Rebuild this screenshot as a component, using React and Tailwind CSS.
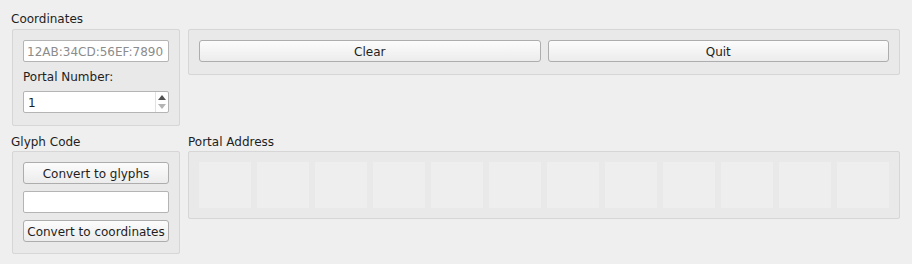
import React from "react";

const font = { fontFamily: '"DejaVu Sans", sans-serif' };

const Button = ({ children, className = "" }) => (
  <button
    className={`h-[22px] rounded-[3px] border border-[#adadad] bg-gradient-to-b from-[#fcfcfc] to-[#ececec] pt-px text-[12px] leading-[14px] text-[#1e1e1e] ${className}`}
  >
    {children}
  </button>
);

const Box = ({ children, className = "" }) => (
  <div className={`rounded-[2px] border border-[#d6d6d6] bg-[#e9e9e9] ${className}`}>
    {children}
  </div>
);

const SpinBox = () => (
  <div className="flex h-[22px] rounded-[2px] border border-[#b4b4b4] bg-white">
    <div className="flex flex-1 items-center pl-[4px] pt-px text-[12px] text-[#1e1e1e]">1</div>
    <div className="flex w-[13px] flex-col items-center justify-center gap-[4px] border-l border-[#e2e2e2]">
      <svg width="8" height="5" viewBox="0 0 8 5">
        <path d="M0 5 L4 0 L8 5 Z" fill="#505050" />
      </svg>
      <svg width="8" height="5" viewBox="0 0 8 5">
        <path d="M0 0 L4 5 L8 0 Z" fill="#b4b4b4" />
      </svg>
    </div>
  </div>
);

export default function App() {
  const tiles = Array.from({ length: 12 }, (_, i) => i);

  return (
    <div
      className="h-[264px] w-[912px] overflow-hidden bg-[#efefef] pl-[12px] pt-[11px] text-[12px] leading-[14px] text-[#1e1e1e]"
      style={font}
    >
      <div className="grid grid-cols-[168px_712px] gap-x-[8px]">
        <div className="-ml-px h-[18px] pt-px">Coordinates</div>
        <div className="h-[18px]" />

        <Box className="flex h-[97px] flex-col px-[10px] pt-[10px]">
          <div className="flex h-[22px] items-center rounded-[2px] border border-[#b4b4b4] bg-white pl-[3px] pt-px text-[#8c8c8c]">
            12AB:34CD:56EF:7890
          </div>
          <div className="flex h-[29px] items-center pt-px">Portal Number:</div>
          <SpinBox />
        </Box>
        <Box className="flex h-[46px] gap-[7px] self-start px-[10px] pt-[10px]">
          <Button className="flex-1">Clear</Button>
          <Button className="flex-1">Quit</Button>
        </Box>

        <div className="-ml-px mt-[9px] h-[16px]">Glyph Code</div>
        <div className="mt-[9px] h-[16px]">Portal Address</div>

        <Box className="flex h-[103px] flex-col gap-[7px] px-[10px] pt-[10px]">
          <Button>Convert to glyphs</Button>
          <div className="h-[22px] rounded-[2px] border border-[#b4b4b4] bg-white" />
          <Button>Convert to coordinates</Button>
        </Box>
        <Box className="grid h-[68px] grid-cols-12 gap-[6px] self-start p-[10px]">
          {tiles.map((i) => (
            <div key={i} className="h-[46px] bg-[#eeeeee]" />
          ))}
        </Box>
      </div>
    </div>
  );
}
